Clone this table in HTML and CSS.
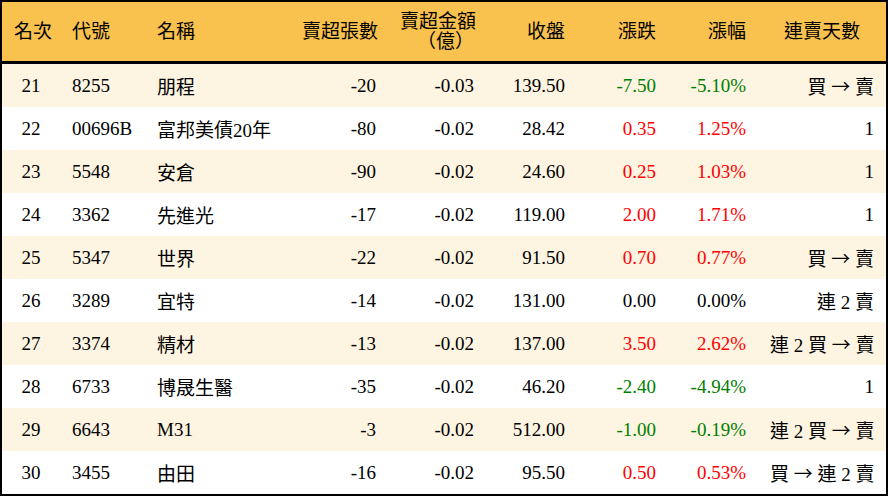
FILE: index.html
```html
<!DOCTYPE html>
<html lang="zh-Hant">
<head>
<meta charset="utf-8">
<link rel="stylesheet" href="styles.css">
</head>
<body>
<table class="rank">
  <colgroup>
    <col class="c-rank"><col class="c-code"><col class="c-name"><col class="c-vol"><col class="c-amt"><col class="c-close"><col class="c-chg"><col class="c-pct"><col class="c-days">
  </colgroup>
  <thead>
    <tr>
      <th class="ctr">名次</th>
      <th class="lft">代號</th>
      <th class="lft">名稱</th>
      <th class="rgt">賣超張數</th>
      <th class="rgt">賣超金額<br>（億）</th>
      <th class="rgt">收盤</th>
      <th class="rgt">漲跌</th>
      <th class="rgt">漲幅</th>
      <th class="ctr">連賣天數</th>
    </tr>
  </thead>
  <tbody>
    <tr class="alt"><td class="ctr">21</td><td>8255</td><td>朋程</td><td class="rgt">-20</td><td class="rgt">-0.03</td><td class="rgt">139.50</td><td class="rgt dn">-7.50</td><td class="rgt dn">-5.10%</td><td class="rgt">買 <span class="arr">→</span> 賣</td></tr>
    <tr><td class="ctr">22</td><td>00696B</td><td>富邦美債20年</td><td class="rgt">-80</td><td class="rgt">-0.02</td><td class="rgt">28.42</td><td class="rgt up">0.35</td><td class="rgt up">1.25%</td><td class="rgt">1</td></tr>
    <tr class="alt"><td class="ctr">23</td><td>5548</td><td>安倉</td><td class="rgt">-90</td><td class="rgt">-0.02</td><td class="rgt">24.60</td><td class="rgt up">0.25</td><td class="rgt up">1.03%</td><td class="rgt">1</td></tr>
    <tr><td class="ctr">24</td><td>3362</td><td>先進光</td><td class="rgt">-17</td><td class="rgt">-0.02</td><td class="rgt">119.00</td><td class="rgt up">2.00</td><td class="rgt up">1.71%</td><td class="rgt">1</td></tr>
    <tr class="alt"><td class="ctr">25</td><td>5347</td><td>世界</td><td class="rgt">-22</td><td class="rgt">-0.02</td><td class="rgt">91.50</td><td class="rgt up">0.70</td><td class="rgt up">0.77%</td><td class="rgt">買 <span class="arr">→</span> 賣</td></tr>
    <tr><td class="ctr">26</td><td>3289</td><td>宜特</td><td class="rgt">-14</td><td class="rgt">-0.02</td><td class="rgt">131.00</td><td class="rgt">0.00</td><td class="rgt">0.00%</td><td class="rgt">連 2 賣</td></tr>
    <tr class="alt"><td class="ctr">27</td><td>3374</td><td>精材</td><td class="rgt">-13</td><td class="rgt">-0.02</td><td class="rgt">137.00</td><td class="rgt up">3.50</td><td class="rgt up">2.62%</td><td class="rgt">連 2 買 <span class="arr">→</span> 賣</td></tr>
    <tr><td class="ctr">28</td><td>6733</td><td>博晟生醫</td><td class="rgt">-35</td><td class="rgt">-0.02</td><td class="rgt">46.20</td><td class="rgt dn">-2.40</td><td class="rgt dn">-4.94%</td><td class="rgt">1</td></tr>
    <tr class="alt"><td class="ctr">29</td><td>6643</td><td>M31</td><td class="rgt">-3</td><td class="rgt">-0.02</td><td class="rgt">512.00</td><td class="rgt dn">-1.00</td><td class="rgt dn">-0.19%</td><td class="rgt">連 2 買 <span class="arr">→</span> 賣</td></tr>
    <tr><td class="ctr">30</td><td>3455</td><td>由田</td><td class="rgt">-16</td><td class="rgt">-0.02</td><td class="rgt">95.50</td><td class="rgt up">0.50</td><td class="rgt up">0.53%</td><td class="rgt">買 <span class="arr">→</span> 連 2 賣</td></tr>
  </tbody>
</table>
</body>
</html>
```
FILE: styles.css
```css
html, body {
  margin: 0;
  padding: 0;
  background: #ffffff;
}

.rank {
  width: 888px;
  border: 2px solid #000;
  border-collapse: separate;
  border-spacing: 0;
  table-layout: fixed;
  font-family: "Liberation Serif", "Noto Sans CJK TC", serif;
  font-size: 19px;
  color: #000;
}

.c-rank { width: 58px; }
.c-code { width: 85px; }
.c-name { width: 145px; }
.c-vol { width: 98px; }
.c-amt { width: 98px; }
.c-close { width: 91px; }
.c-chg { width: 91px; }
.c-pct { width: 90px; }
.c-days { width: 128px; }

.rank th {
  background: #f9c14e;
  padding: 0 12px;
  font-weight: normal;
  line-height: 20px;
  border-bottom: 3px solid #000;
  box-sizing: border-box;
  white-space: nowrap;
}

.rank thead th {
  height: 62px;
}

.rank td {
  height: 43px;
  padding: 0 12px;
  box-sizing: border-box;
  white-space: nowrap;
  text-align: left;
  vertical-align: middle;
}

.rank tr.alt td {
  background: #fdf4e1;
}

.rank .ctr { text-align: center; }
.rank .lft { text-align: left; }
.rank .rgt { text-align: right; }

.rank .up { color: #ff0000; }
.rank .dn { color: #008000; }

.rank .arr {
  font-family: "Noto Sans CJK TC", sans-serif;
}
```
